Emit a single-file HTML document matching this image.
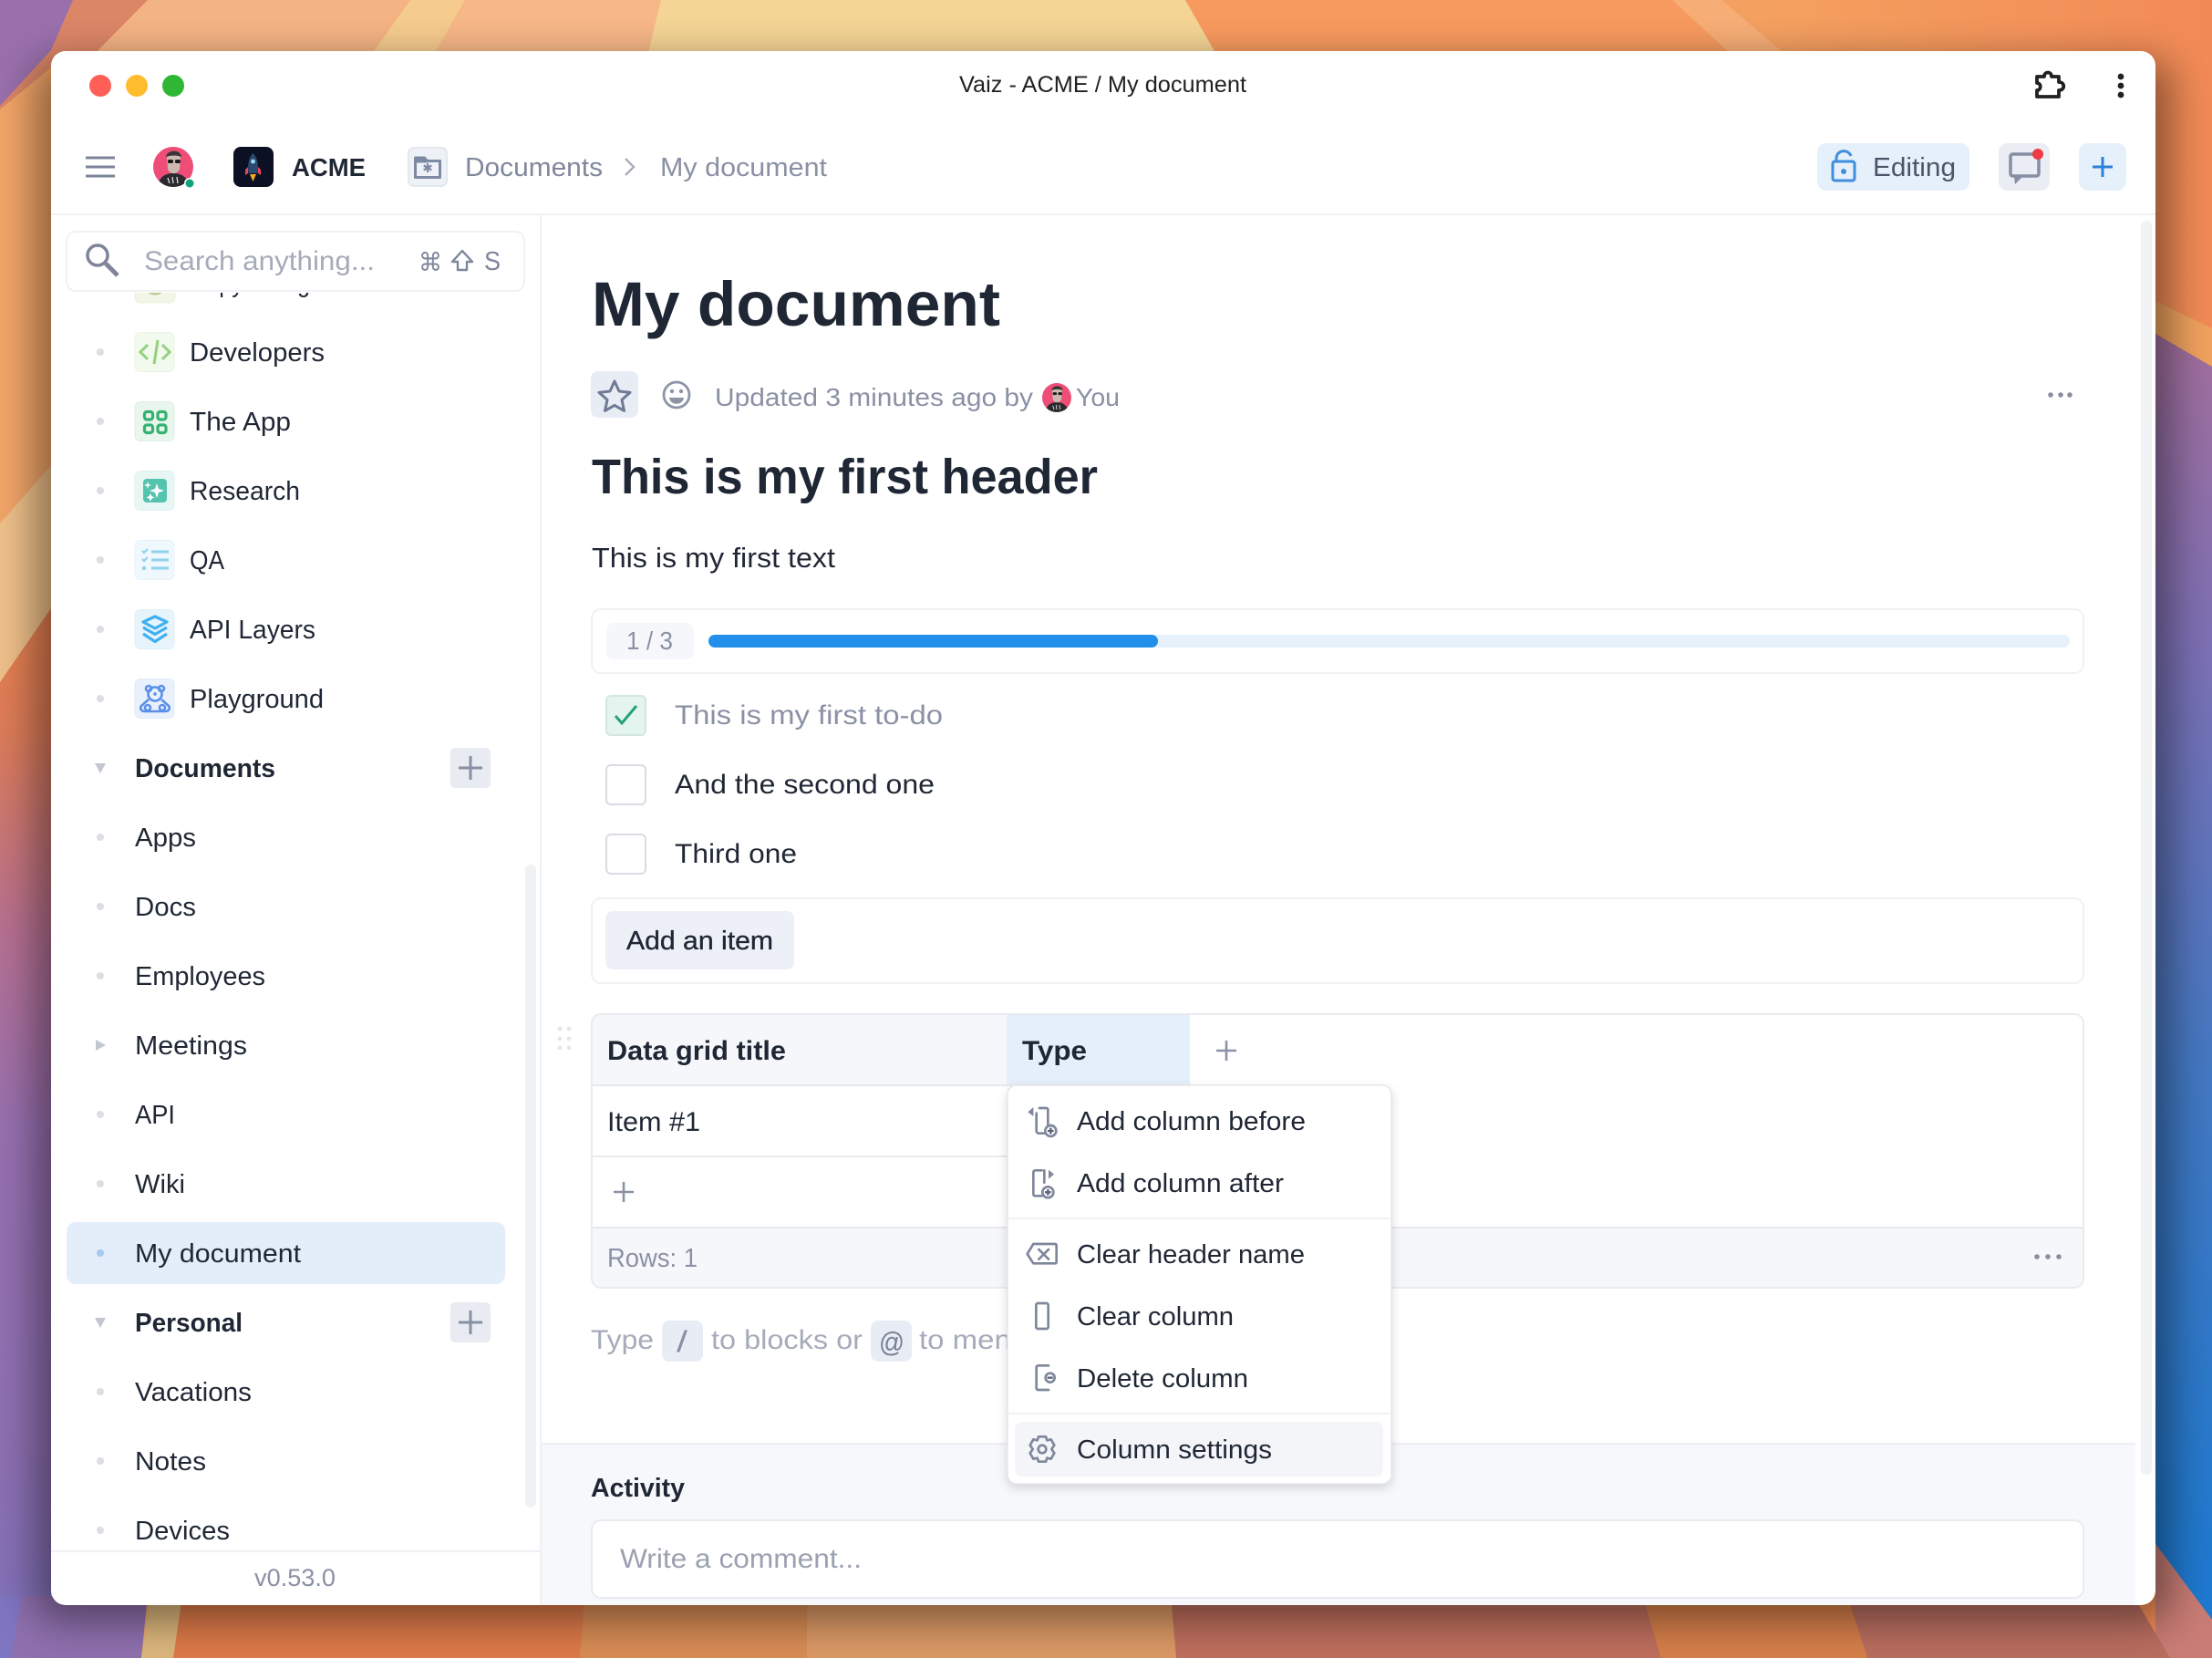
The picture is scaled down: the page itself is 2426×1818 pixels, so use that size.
<!DOCTYPE html>
<html lang="en"><head><meta charset="utf-8"><title>Vaiz - ACME / My document</title>
<style>
html,body{margin:0;padding:0;background:#f29a5d;width:2426px;height:1818px;overflow:hidden}
svg{display:block}
text{font-family:"Liberation Sans",sans-serif;fill:#1f2735;font-size:29px}
.b{font-weight:700}
.m{stroke:#1f2735;stroke-width:.35px}
.g{fill:#8a91a4}
.l{fill:#a5abba}
.ic{fill:none;stroke:#7f879b;stroke-width:8;stroke-linecap:round;stroke-linejoin:round}
</style></head><body>
<svg xmlns="http://www.w3.org/2000/svg" width="2426" height="1818" viewBox="0 0 2426 1818">
<defs>
<linearGradient id="wl" x1="0" y1="660" x2="0" y2="1818" gradientUnits="userSpaceOnUse"><stop offset="0" stop-color="#e8804e"/><stop offset=".12" stop-color="#dd7c58"/><stop offset=".32" stop-color="#b57093"/><stop offset=".5" stop-color="#9670b0"/><stop offset=".8" stop-color="#8e70b2"/><stop offset="1" stop-color="#7f72bb"/></linearGradient>
<linearGradient id="wr" x1="0" y1="360" x2="0" y2="1720" gradientUnits="userSpaceOnUse"><stop offset="0" stop-color="#a36f9c"/><stop offset=".25" stop-color="#7d70b4"/><stop offset=".6" stop-color="#4378c2"/><stop offset="1" stop-color="#1f79cf"/></linearGradient>
<linearGradient id="wt" x1="0" y1="0" x2="2426" y2="0" gradientUnits="userSpaceOnUse"><stop offset="0" stop-color="#f2a568"/><stop offset=".55" stop-color="#f7a368"/><stop offset=".8" stop-color="#f4a060"/><stop offset="1" stop-color="#f28a56"/></linearGradient>
<filter id="sh" x="-10%" y="-10%" width="120%" height="120%"><feGaussianBlur stdDeviation="22"/></filter>
<filter id="ps" x="-10%" y="-10%" width="120%" height="125%"><feGaussianBlur stdDeviation="6"/></filter>
<clipPath id="win"><rect x="56" y="56" width="2308" height="1704" rx="16"/></clipPath>
<clipPath id="side"><rect x="56" y="237" width="536" height="1464"/></clipPath>
<clipPath id="grid"><rect x="649" y="1111" width="1636" height="301" rx="10"/></clipPath>
<clipPath id="av"><circle cx="22" cy="22" r="22"/></clipPath>
<symbol id="avatar" viewBox="0 0 44 44">
<g clip-path="url(#av)"><rect width="44" height="44" fill="#ee4d77"/>
<path d="M5 44c1-10 7-15 17-15s16 5 18 15z" fill="#2a2a2e"/>
<path d="M15 12c0-7 14-7 15 0l-1 12c-2 7-11 7-13 0z" fill="#cbb9b2"/>
<path d="M14 11c1-8 16-9 17 0-5-2-11-2-17 0z" fill="#3a3535"/>
<rect x="16" y="14" width="6" height="4" rx="1.500" fill="#1c1c1e"/><rect x="24" y="14" width="6" height="4" rx="1.500" fill="#1c1c1e"/>
<path d="M16 34l2 6M21 33l1 7M26 33l1 7" stroke="#ddd" stroke-width="1.300"/></g>
</symbol>
</defs>

<!-- wallpaper -->
<rect width="2426" height="1818" fill="url(#wt)"/>
<polygon points="0,0 80,0 93,20 56,60 0,120" fill="#9a70ac"/>
<polygon points="80,0 162,0 93,70 56,74 0,120 0,116 56,55" fill="#dc8668"/>
<polygon points="162,0 450,0 400,70 93,70" fill="#f4b383"/>
<polygon points="450,0 512,0 470,70 400,70" fill="#f5cb8e"/>
<polygon points="510,0 725,0 708,70 470,70" fill="#f7b787"/>
<polygon points="725,0 1300,0 1340,70 708,70" fill="#f4d595"/>
<polygon points="1300,0 1834,0 1910,70 1340,70" fill="#f79a5f"/>
<polygon points="1834,0 1888,0 1970,70 1910,70" fill="#f7ad76"/>
<polygon points="0,574 56,510 56,667 0,748" fill="#efc08a"/>
<polygon points="0,748 56,667 56,1818 0,1818" fill="url(#wl)"/>
<polygon points="2364,330 2426,360 2426,402 2364,366" fill="#f0a25e"/>
<polygon points="2364,366 2426,402 2426,1776 2364,1693" fill="url(#wr)"/>
<polygon points="2364,1693 2426,1776 2426,1818 2364,1818" fill="#c87c74"/>
<polygon points="0,1750 162,1750 155,1818 0,1818" fill="#8f70ae"/>
<polygon points="0,1750 24,1750 12,1818 0,1818" fill="#7f76c2"/>
<polygon points="165,1750 200,1750 190,1818 155,1818" fill="#dcb67c"/>
<polygon points="200,1750 642,1750 636,1818 190,1818" fill="#dd7a48"/>
<polygon points="642,1750 885,1750 885,1818 636,1818" fill="#d88c55"/>
<polygon points="885,1750 1284,1750 1290,1818 885,1818" fill="#db9965"/>
<polygon points="1284,1750 1802,1750 1822,1818 1290,1818" fill="#bf6f5d"/>
<polygon points="1802,1750 2026,1750 2048,1818 1822,1818" fill="#d67f4a"/>
<polygon points="2026,1750 2340,1750 2380,1818 2048,1818" fill="#b96e5f"/>
<rect x="38" y="66" width="2344" height="1712" rx="24" fill="#000" opacity=".42" filter="url(#sh)"/>

<!-- window -->
<g clip-path="url(#win)">
<rect x="56" y="56" width="2308" height="1704" fill="#fff"/>

<!-- title bar -->
<circle cx="110" cy="94" r="12" fill="#ff5f57"/>
<circle cx="150" cy="94" r="12" fill="#febc2e"/>
<circle cx="190" cy="94" r="12" fill="#2fb634"/>
<text x="1052" y="101" textLength="315" lengthAdjust="spacingAndGlyphs" style="font-size:25px;fill:#222">Vaiz - ACME / My document</text>
<path d="M2234 84H2242C2242 78 2250 78 2250 84H2258V90C2265 90 2265 99 2258 99V106H2234V99C2239 99 2239 91 2234 91Z" fill="none" stroke="#202124" stroke-width="3.800" stroke-linejoin="round"/>
<circle cx="2326" cy="84" r="3.400" fill="#202124"/><circle cx="2326" cy="94" r="3.400" fill="#202124"/><circle cx="2326" cy="104" r="3.400" fill="#202124"/>

<!-- header -->
<path d="M94 173H126M94 183H126M94 193H126" stroke="#7c8499" stroke-width="3"/>
<use href="#avatar" x="168" y="161" width="44" height="44"/>
<circle cx="208" cy="201" r="6" fill="#fff"/><circle cx="208" cy="201" r="4.500" fill="#12a07e"/>
<rect x="256" y="161" width="44" height="44" rx="8" fill="#0b1122"/>
<path d="M277.500 168c5 5 6 12 5 22h-10c-1-10 0-17 5-22z" fill="#2b4a72"/><circle cx="277.500" cy="177" r="2.400" fill="#9fd8f0"/>
<path d="M272 183l-3 3v6l3-2zM283 183l3 3v6l-3-2z" fill="#e8465c"/><path d="M274 191h7l-3.500 8z" fill="#f5a623"/>
<text x="320" y="193" textLength="81" lengthAdjust="spacingAndGlyphs" class="b" style="font-size:28px">ACME</text>
<rect x="448" y="162" width="42" height="42" rx="6" fill="#eef1f6" stroke="#e3e7ee" stroke-width="2"/>
<path d="M455.500 173h10l3 3.500h14v18h-27z" fill="none" stroke="#7e89a3" stroke-width="3" stroke-linejoin="round"/>
<path d="M455.500 173h10l3 3.500v2h-13z" fill="#7e89a3"/>
<path d="M469 179v10M464.700 181.500l8.600 5M473.300 181.500l-8.600 5" stroke="#7e89a3" stroke-width="2.200"/>
<text x="510" y="193" textLength="151" lengthAdjust="spacingAndGlyphs" style="fill:#7f879b">Documents</text>
<path d="M686 174l9 9-9 9" fill="none" stroke="#a9aebb" stroke-width="2.400"/>
<text x="724" y="193" textLength="183" lengthAdjust="spacingAndGlyphs" style="fill:#8a91a4">My document</text>
<rect x="1993" y="157" width="167" height="52" rx="10" fill="#e6f0fb"/>
<rect x="2010" y="177" width="24" height="21" rx="2.500" fill="none" stroke="#3f8ddd" stroke-width="3"/>
<path d="M2014 177v-3c0-10 13-11 16-3" fill="none" stroke="#3f8ddd" stroke-width="3"/>
<circle cx="2022" cy="188" r="3" fill="#3f8ddd"/>
<text x="2054" y="193" textLength="91" lengthAdjust="spacingAndGlyphs" style="fill:#4a5568">Editing</text>
<rect x="2192" y="157" width="56" height="52" rx="10" fill="#eaedf3"/>
<rect x="2205" y="169" width="31" height="24" rx="2.500" fill="none" stroke="#868ea4" stroke-width="3.500"/>
<path d="M2209 194h9l-8 8z" fill="#868ea4"/>
<circle cx="2235" cy="169" r="6" fill="#ee3b46"/>
<rect x="2280" y="157" width="52" height="52" rx="10" fill="#e6f0fb"/>
<path d="M2306 172v22M2295 183h22" stroke="#2f80d8" stroke-width="3"/>
<rect x="56" y="234" width="2308" height="2" fill="#eff1f4"/>

<rect x="592" y="236" width="2" height="1524" fill="#f0f1f4"/>

<!-- sidebar list -->
<g clip-path="url(#side)">
<rect x="148" y="288" width="44" height="44" rx="6" fill="#f2f6e9" stroke="#ebf0df" stroke-width="1"/>
<circle cx="170" cy="310" r="12" fill="none" stroke="#b8cc8e" stroke-width="3"/>
<text x="208" y="320" textLength="132" lengthAdjust="spacingAndGlyphs">Copywriting</text>

<g fill="#dcdee3"><circle cx="110" cy="386" r="4"/><circle cx="110" cy="462" r="4"/><circle cx="110" cy="538" r="4"/><circle cx="110" cy="614" r="4"/><circle cx="110" cy="690" r="4"/><circle cx="110" cy="766" r="4"/><circle cx="110" cy="918" r="4"/><circle cx="110" cy="994" r="4"/><circle cx="110" cy="1070" r="4"/><circle cx="110" cy="1222" r="4"/><circle cx="110" cy="1298" r="4"/><circle cx="110" cy="1526" r="4"/><circle cx="110" cy="1602" r="4"/><circle cx="110" cy="1678" r="4"/></g>

<rect x="148" y="364.500" width="43" height="43" rx="6" fill="#f2f9ed" stroke="#eaf3e4"/>
<path d="M162 378l-8 8 8 8M178 378l8 8-8 8" fill="none" stroke="#92d27d" stroke-width="3"/><path d="M173 373l-4 26" stroke="#92d27d" stroke-width="3"/>
<rect x="148" y="440.500" width="43" height="43" rx="6" fill="#e9f6ee" stroke="#dfeee5"/>
<g fill="none" stroke="#35b26f" stroke-width="3.200"><rect x="158.500" y="451.500" width="9" height="8.500" rx="2.500"/><rect x="173" y="451.500" width="9" height="8.500" rx="2.500"/><rect x="158.500" y="466" width="9" height="8.500" rx="2.500"/><rect x="173" y="466" width="9" height="8.500" rx="2.500"/></g>
<rect x="148" y="516.500" width="43" height="43" rx="6" fill="#e8f7f4" stroke="#e0f1ee"/>
<rect x="157" y="525" width="26" height="26" rx="4" fill="#55c4ae"/>
<path d="M172 530l2 6 6 2-6 2-2 6-2-6-6-2 6-2z" fill="#fff"/><path d="M162 528l1 3 3 1-3 1-1 3-1-3-3-1 3-1z" fill="#fff"/><path d="M165 541l1.400 3 3 1.400-3 1.400-1.400 3-1.400-3-3-1.400 3-1.400z" fill="#fff"/>
<rect x="148" y="592.500" width="43" height="43" rx="6" fill="#eff8fd" stroke="#e7f2f8"/>
<path d="M166 605h19M166 614h19M166 623h19" stroke="#8fd2ef" stroke-width="3"/>
<path d="M156 604l2 2 4-4M156 613l2 2 4-4" fill="none" stroke="#8fd2ef" stroke-width="2.200"/><circle cx="158" cy="623" r="2.200" fill="#8fd2ef"/>
<rect x="148" y="668.500" width="43" height="43" rx="6" fill="#e8f4fc" stroke="#dfeef8"/>
<g fill="none" stroke="#3fb0ef" stroke-width="3.200" stroke-linejoin="round"><path d="M170 676l13 6-13 7-13-7z"/><path d="M157 688l13 7.500 13-7.500"/><path d="M157 695l13 8.500 13-8.500"/></g>
<rect x="148" y="744.500" width="43" height="43" rx="6" fill="#e9f1fc" stroke="#e0e9f6"/>
<g fill="none" stroke="#5b8fe8" stroke-width="2.600"><circle cx="170" cy="761" r="7.500"/><circle cx="163" cy="755" r="3"/><circle cx="177" cy="755" r="3"/><path d="M163 767l-8 7c-2 3 0 6 4 6h22c4 0 6-3 4-6l-8-7"/><circle cx="162" cy="776" r="3"/><circle cx="178" cy="776" r="3"/></g>
<circle cx="170" cy="761" r="1.800" fill="#5b8fe8"/>

<text x="208" y="396" textLength="148" lengthAdjust="spacingAndGlyphs">Developers</text>
<text x="208" y="472" textLength="111" lengthAdjust="spacingAndGlyphs">The App</text>
<text x="208" y="548" textLength="121" lengthAdjust="spacingAndGlyphs">Research</text>
<text x="208" y="624" textLength="38" lengthAdjust="spacingAndGlyphs">QA</text>
<text x="208" y="700" textLength="138" lengthAdjust="spacingAndGlyphs">API Layers</text>
<text x="208" y="776" textLength="147" lengthAdjust="spacingAndGlyphs">Playground</text>

<path d="M104 837h12l-6 11z" fill="#c3c7d2"/>
<text x="148" y="852" textLength="154" lengthAdjust="spacingAndGlyphs" class="b">Documents</text>
<rect x="494" y="820" width="44" height="44" rx="5" fill="#e8ebf1"/><path d="M516 829v26M503 842h26" stroke="#8890a3" stroke-width="3"/>
<text x="148" y="928" textLength="67" lengthAdjust="spacingAndGlyphs">Apps</text>
<text x="148" y="1004" textLength="67" lengthAdjust="spacingAndGlyphs">Docs</text>
<text x="148" y="1080" textLength="143" lengthAdjust="spacingAndGlyphs">Employees</text>
<path d="M105 1140l11 6-11 6z" fill="#c3c7d2"/>
<text x="148" y="1156" textLength="123" lengthAdjust="spacingAndGlyphs">Meetings</text>
<text x="148" y="1232" textLength="44" lengthAdjust="spacingAndGlyphs">API</text>
<text x="148" y="1308" textLength="55" lengthAdjust="spacingAndGlyphs">Wiki</text>
<rect x="73" y="1340" width="481" height="68" rx="10" fill="#e4eefa"/><circle cx="110" cy="1374" r="4" fill="#a9c8ee"/>
<text x="148" y="1384" textLength="182" lengthAdjust="spacingAndGlyphs">My document</text>
<path d="M104 1445h12l-6 11z" fill="#c3c7d2"/>
<text x="148" y="1460" textLength="118" lengthAdjust="spacingAndGlyphs" class="b">Personal</text>
<rect x="494" y="1428" width="44" height="44" rx="5" fill="#e8ebf1"/><path d="M516 1437v26M503 1450h26" stroke="#8890a3" stroke-width="3"/>
<text x="148" y="1536" textLength="128" lengthAdjust="spacingAndGlyphs">Vacations</text>
<text x="148" y="1612" textLength="78" lengthAdjust="spacingAndGlyphs">Notes</text>
<text x="148" y="1688" textLength="104" lengthAdjust="spacingAndGlyphs">Devices</text>
</g>

<rect x="576" y="948" width="12" height="705" rx="6" fill="#eff1f3"/>
<rect x="56" y="1700" width="536" height="2" fill="#eff1f4"/>
<text x="279" y="1739" textLength="89" lengthAdjust="spacingAndGlyphs" class="g" style="font-size:27px">v0.53.0</text>

<!-- search -->
<rect x="56" y="237" width="536" height="84" fill="#fff"/>
<rect x="73" y="254" width="502" height="65" rx="10" fill="#fff" stroke="#eff1f4" stroke-width="2"/>
<circle cx="107" cy="280" r="11" fill="none" stroke="#7e8599" stroke-width="3.500"/><path d="M116 289l13 13" stroke="#7e8599" stroke-width="5"/>
<text x="158" y="296" textLength="253" lengthAdjust="spacingAndGlyphs" class="l" style="font-size:30px">Search anything...</text>
<text x="459" y="297" textLength="26" lengthAdjust="spacingAndGlyphs" style="font-family:'DejaVu Sans',sans-serif;font-size:28px;fill:#7f879b">⌘</text>
<path d="M507 275l11 12h-6v9h-10v-9h-6z" fill="none" stroke="#7f879b" stroke-width="2.400" stroke-linejoin="round"/>
<text x="531" y="296" textLength="18" lengthAdjust="spacingAndGlyphs" style="font-size:29px;fill:#7f879b">S</text>

<!-- document -->
<text x="649" y="357" textLength="448" lengthAdjust="spacingAndGlyphs" class="b" style="font-size:69px">My document</text>
<rect x="648" y="407" width="52" height="51" rx="8" fill="#e8edf5"/>
<path d="M674 418l5 11 12 1.400-9 8 2.500 12-10.500-6-10.500 6 2.500-12-9-8 12-1.400z" fill="none" stroke="#6f7a94" stroke-width="3" stroke-linejoin="round"/>
<circle cx="742" cy="433" r="14" fill="none" stroke="#8d94a6" stroke-width="2.800"/>
<circle cx="737" cy="429" r="2.200" fill="#8d94a6"/><circle cx="747" cy="429" r="2.200" fill="#8d94a6"/><path d="M734 436h16c-1 9-15 9-16 0z" fill="#8d94a6"/>
<text x="784" y="445" textLength="349" lengthAdjust="spacingAndGlyphs" class="g" style="font-size:28px">Updated 3 minutes ago by</text>
<use href="#avatar" x="1143" y="420" width="32" height="32"/>
<text x="1180" y="445" textLength="48" lengthAdjust="spacingAndGlyphs" class="g" style="font-size:28px">You</text>
<circle cx="2249" cy="433" r="2.800" fill="#8a8f9f"/><circle cx="2260" cy="433" r="2.800" fill="#8a8f9f"/><circle cx="2270" cy="433" r="2.800" fill="#8a8f9f"/>
<text x="649" y="541" textLength="555" lengthAdjust="spacingAndGlyphs" class="b" style="font-size:54px">This is my first header</text>
<text x="649" y="622" textLength="267" lengthAdjust="spacingAndGlyphs" style="font-size:31px">This is my first text</text>

<!-- progress -->
<rect x="649" y="668" width="1636" height="70" rx="10" fill="#fff" stroke="#eff1f4" stroke-width="2"/>
<rect x="665" y="683" width="96" height="40" rx="8" fill="#f5f7fa"/>
<text x="687" y="712" textLength="51" lengthAdjust="spacingAndGlyphs" class="g" style="font-size:28px">1 / 3</text>
<rect x="777" y="696" width="1493" height="14" rx="7" fill="#e7f1fb"/>
<rect x="777" y="696" width="493" height="14" rx="7" fill="#2290ea"/>

<!-- todos -->
<rect x="665" y="763" width="43" height="43" rx="5" fill="#e4f5ef" stroke="#d3e7df" stroke-width="2"/>
<path d="M675 785l7 8 16-19" fill="none" stroke="#24a27c" stroke-width="3"/>
<text x="740" y="794" textLength="294" lengthAdjust="spacingAndGlyphs" class="g" style="font-size:30px">This is my first to-do</text>
<rect x="665" y="839" width="43" height="43" rx="5" fill="#fff" stroke="#d9dce3" stroke-width="2"/>
<text x="740" y="870" textLength="285" lengthAdjust="spacingAndGlyphs" style="font-size:30px">And the second one</text>
<rect x="665" y="915" width="43" height="43" rx="5" fill="#fff" stroke="#d9dce3" stroke-width="2"/>
<text x="740" y="946" textLength="134" lengthAdjust="spacingAndGlyphs" style="font-size:30px">Third one</text>
<rect x="649" y="985" width="1636" height="93" rx="10" fill="#fff" stroke="#eff1f4" stroke-width="2"/>
<rect x="664" y="999" width="207" height="64" rx="8" fill="#edf0f7"/>
<text x="687" y="1041" textLength="161" lengthAdjust="spacingAndGlyphs" class="m">Add an item</text>

<!-- grid -->
<g fill="#e4e6eb"><circle cx="614" cy="1128" r="2.400"/><circle cx="624" cy="1128" r="2.400"/><circle cx="614" cy="1139" r="2.400"/><circle cx="624" cy="1139" r="2.400"/><circle cx="614" cy="1149" r="2.400"/><circle cx="624" cy="1149" r="2.400"/></g>
<g clip-path="url(#grid)">
<rect x="649" y="1111" width="455" height="79" fill="#f5f7fb"/>
<rect x="1104" y="1111" width="201" height="79" fill="#e5effb"/>
<rect x="649" y="1346" width="1636" height="66" fill="#f6f7fb"/>
<rect x="649" y="1189" width="656" height="2" fill="#e6e8ed"/>
<rect x="649" y="1267" width="456" height="2" fill="#e9ebef"/>
<rect x="649" y="1345" width="1636" height="2" fill="#e6e8ed"/>
</g>
<rect x="649" y="1112" width="1636" height="300" rx="10" fill="none" stroke="#e9ebef" stroke-width="2"/>
<text x="666" y="1162" textLength="196" lengthAdjust="spacingAndGlyphs" class="b" style="font-size:30px">Data grid title</text>
<text x="1121" y="1162" textLength="71" lengthAdjust="spacingAndGlyphs" class="b" style="font-size:30px">Type</text>
<path d="M1345 1141v22M1334 1152h22" stroke="#8a92a5" stroke-width="2.600"/>
<text x="666" y="1240" textLength="102" lengthAdjust="spacingAndGlyphs" style="font-size:30px">Item #1</text>
<path d="M684 1296v22M673 1307h22" stroke="#8a92a5" stroke-width="2.600"/>
<text x="666" y="1389" textLength="99" lengthAdjust="spacingAndGlyphs" class="g">Rows: 1</text>
<circle cx="2234" cy="1378" r="2.800" fill="#8a8f9f"/><circle cx="2246" cy="1378" r="2.800" fill="#8a8f9f"/><circle cx="2258" cy="1378" r="2.800" fill="#8a8f9f"/>

<!-- hint -->
<text x="648" y="1479" textLength="69" lengthAdjust="spacingAndGlyphs" class="l" style="font-size:30px">Type</text>
<rect x="726" y="1448" width="45" height="45" rx="8" fill="#e8edf5"/>
<text x="742" y="1482" textLength="12" lengthAdjust="spacingAndGlyphs" style="font-size:32px;fill:#8a91a4">/</text>
<text x="780" y="1479" textLength="166" lengthAdjust="spacingAndGlyphs" class="l" style="font-size:30px">to blocks or</text>
<rect x="955" y="1448" width="45" height="45" rx="8" fill="#e8edf5"/>
<text x="964" y="1482" textLength="28" lengthAdjust="spacingAndGlyphs" style="font-size:31px;fill:#767e92">@</text>
<text x="1008" y="1479" textLength="110" lengthAdjust="spacingAndGlyphs" class="l" style="font-size:30px">to ment</text>

<!-- activity -->
<rect x="594" y="1582" width="1748" height="178" fill="#f6f8fb"/>
<rect x="594" y="1582" width="1748" height="2" fill="#eceef2"/>
<text x="648" y="1641" textLength="103" lengthAdjust="spacingAndGlyphs" class="b">Activity</text>
<rect x="649" y="1667" width="1636" height="85" rx="10" fill="#fff" stroke="#e8ebf0" stroke-width="2"/>
<text x="680" y="1719" textLength="265" lengthAdjust="spacingAndGlyphs" style="font-size:30px;fill:#9aa1b1">Write a comment...</text>

<rect x="2348" y="242" width="12" height="1375" rx="6" fill="#f0f2f4"/>

<!-- popup -->
<rect x="1105" y="1194" width="421" height="437" rx="10" fill="#000" opacity=".16" filter="url(#ps)"/>
<rect x="1105" y="1190" width="421" height="437" rx="10" fill="#fff" stroke="#e5e7ec" stroke-width="1.500"/>
<rect x="1105" y="1335" width="421" height="2" fill="#eff1f4"/>
<rect x="1105" y="1549" width="421" height="2" fill="#eff1f4"/>
<rect x="1113" y="1559" width="404" height="60" rx="8" fill="#f3f5f9"/>
<g transform="translate(1100 1180) scale(.33333)">
<path class="ic" d="M148 160V110a5 5 0 0 0-5-5H120M110 122V180a8 8 0 0 0 8 8h18"/>
<path d="M82 118l18-16v30z" fill="#7f879b"/>
<circle class="ic" cx="157" cy="180" r="18"/><path d="M147 180h20M157 170v20" stroke="#596176" stroke-width="7"/>

<path class="ic" d="M128 310H106a6 6 0 0 0-6 6V388a6 6 0 0 0 6 6h22M136 310V350"/>
<path d="M168 323l-18-15v30z" fill="#7f879b"/>
<circle class="ic" cx="148" cy="382" r="18"/><path d="M138 382h20M148 372v20" stroke="#596176" stroke-width="7"/>

<path class="ic" d="M100 552H172a4 4 0 0 1 4 4V612a4 4 0 0 1-4 4H100L80 585Z"/>
<path class="ic" d="M118 570L150 602M150 570L118 602"/>

<rect class="ic" x="109" y="747" width="40" height="84" rx="6"/>

<path class="ic" d="M150 952H116a6 6 0 0 0-6 6V1026a6 6 0 0 0 6 6H150"/>
<circle class="ic" cx="155" cy="992" r="15"/><path d="M146 992h18" stroke="#596176" stroke-width="7"/>

<path class="ic" d="M117 1186h24l4 12 13 -3 11 19-9 13 9 13-11 19-13-3-4 12h-24l-4-12-13 3-11-19 9-13-9-13 11-19 13 3z"/>
<circle class="ic" cx="129" cy="1227" r="13"/>
</g>
<text x="1181" y="1239" textLength="251" lengthAdjust="spacingAndGlyphs">Add column before</text>
<text x="1181" y="1307" textLength="227" lengthAdjust="spacingAndGlyphs">Add column after</text>
<text x="1181" y="1385" textLength="250" lengthAdjust="spacingAndGlyphs">Clear header name</text>
<text x="1181" y="1453" textLength="172" lengthAdjust="spacingAndGlyphs">Clear column</text>
<text x="1181" y="1521" textLength="188" lengthAdjust="spacingAndGlyphs">Delete column</text>
<text x="1181" y="1599" textLength="214" lengthAdjust="spacingAndGlyphs">Column settings</text>
</g>
</svg>
</body></html>
